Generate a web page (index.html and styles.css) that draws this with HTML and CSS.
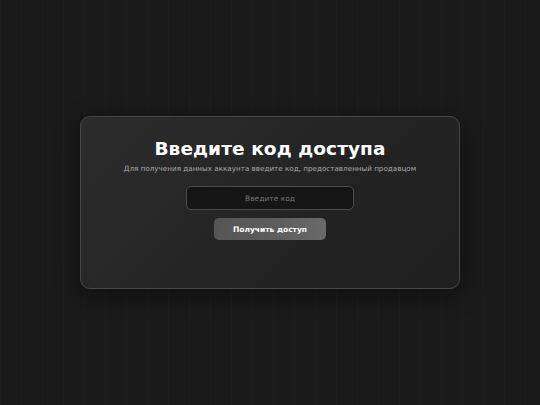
FILE: index.html
```html
<!DOCTYPE html>
<html lang="ru">
<head>
<meta charset="utf-8">
<link rel="stylesheet" href="styles.css">
</head>
<body>
<main class="page">
  <section class="card">
    <h1 class="title">Введите код доступа</h1>
    <p class="subtitle">Для получения данных аккаунта введите код, предоставленный продавцом</p>
    <input class="code-input" type="text" placeholder="Введите код">
    <button class="submit">Получить доступ</button>
  </section>
</main>
</body>
</html>
```
FILE: styles.css
```css
* { box-sizing: border-box; }
html, body { margin: 0; height: 100%; }
body {
  background-color: #1a1a1a;
  background-image: repeating-linear-gradient(90deg, rgba(255,255,255,0.014) 0 1px, transparent 1px 21px);
  font-family: "DejaVu Sans", "Liberation Sans", sans-serif;
  color: #fff;
}
.page {
  height: 405px;
  display: flex;
  align-items: center;
  justify-content: center;
}
.card {
  width: 380px;
  height: 173px;
  border: 1px solid #474747;
  border-radius: 10px;
  background: linear-gradient(135deg, #2c2c2c 0%, #232323 60%, #1f1f1f 100%);
  box-shadow: 0 6px 24px rgba(0,0,0,0.45);
  display: flex;
  flex-direction: column;
  align-items: center;
  padding-top: 20px;
}
.title {
  margin: 0;
  font-size: 18.5px;
  line-height: 24px;
  font-weight: 700;
  letter-spacing: 0.1px;
  color: #fff;
}
.subtitle {
  margin: 3px 0 0;
  font-size: 7.2px;
  line-height: 10px;
  color: #a8a8a8;
}
.code-input {
  margin-top: 12px;
  width: 168px;
  height: 24px;
  border: 1px solid #4a4a4a;
  border-radius: 5px;
  background: #151515;
  color: #ddd;
  text-align: center;
  font-family: inherit;
  font-size: 7.5px;
  outline: none;
}
.code-input::placeholder { color: #767676; }
.submit {
  margin-top: 8px;
  width: 112px;
  height: 22px;
  border: none;
  border-radius: 5px;
  background: linear-gradient(90deg, #555 0%, #5e5e5e 60%, #6a6a6a 100%);
  color: #fff;
  font-family: inherit;
  font-weight: 700;
  font-size: 7.5px;
}
```
